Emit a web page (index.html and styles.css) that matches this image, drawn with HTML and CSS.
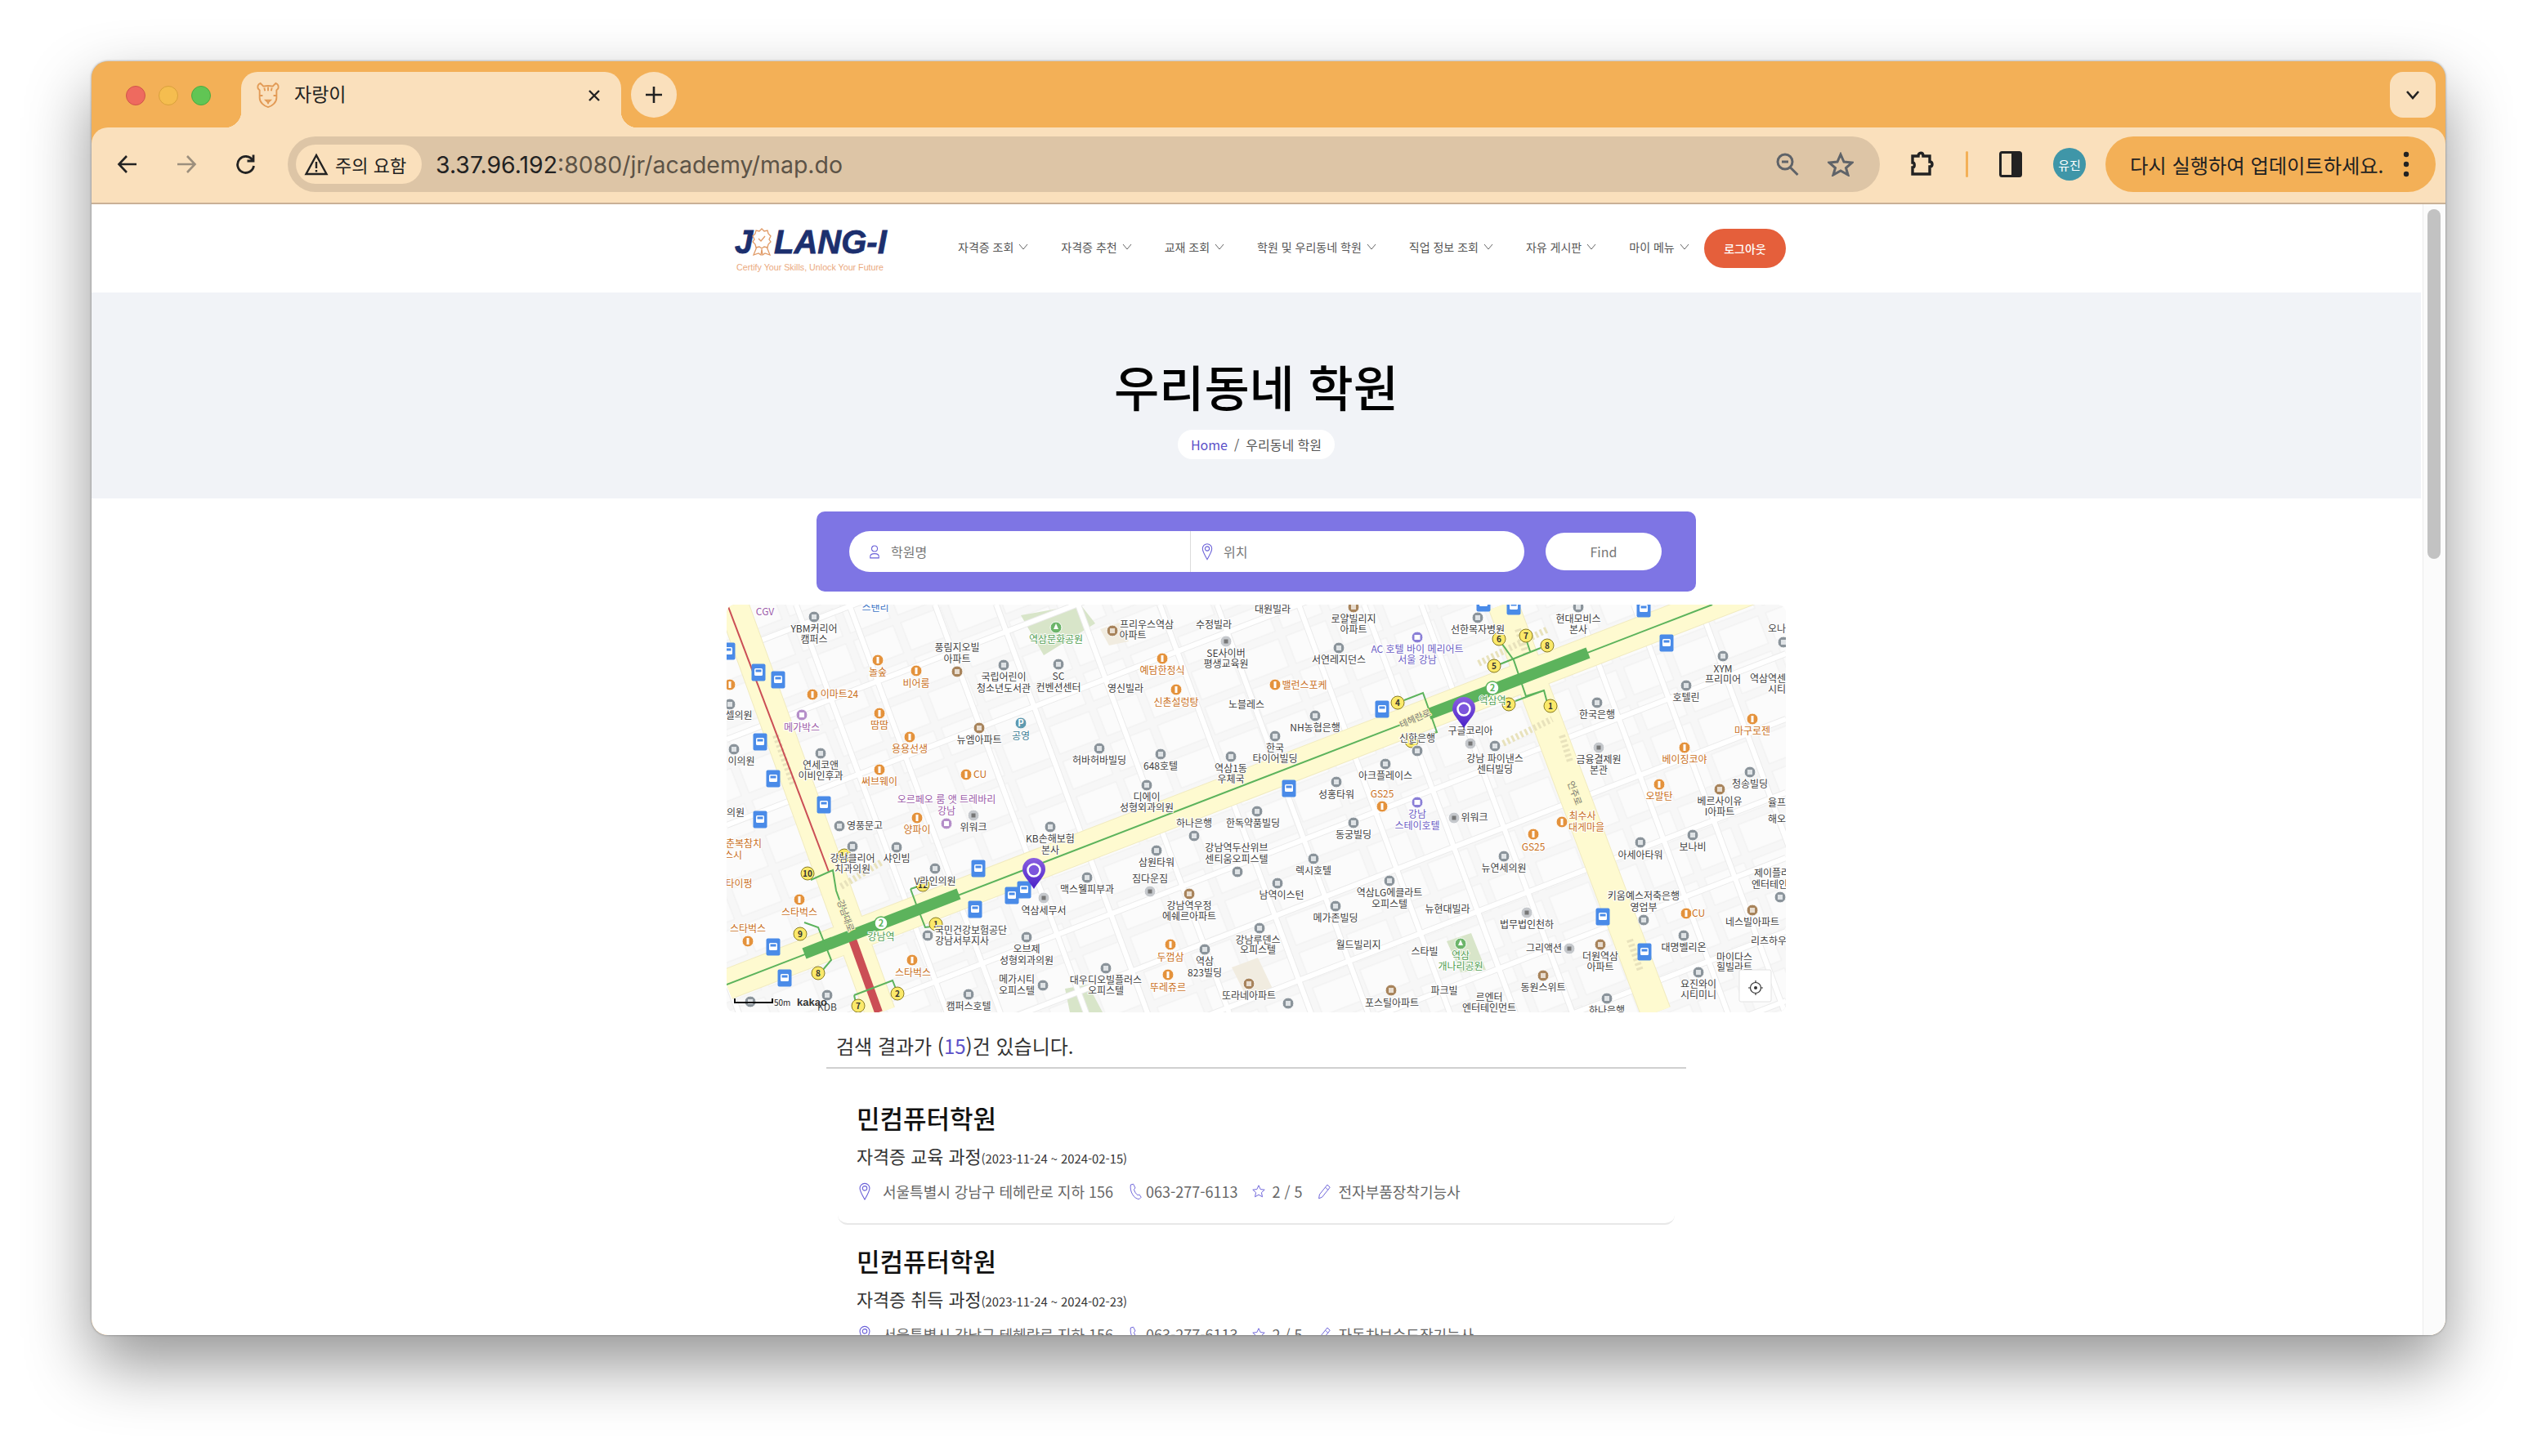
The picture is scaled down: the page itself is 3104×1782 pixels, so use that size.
FILE: index.html
```html
<!DOCTYPE html>
<html lang="ko">
<head>
<meta charset="utf-8">
<title>자랑이</title>
<link rel="stylesheet" href="styles.css">
</head>
<body>
<div class="window">
  <div class="tabstrip">
    <div class="lights"><i class="light red"></i><i class="light yellow"></i><i class="light green"></i></div>
    <div class="tab">
      <svg class="favicon" viewBox="0 0 30 34" fill="none" stroke="#e29a55" stroke-width="2"><path d="M5 2c-3 1-4 4-3 7l2 2v10c0 6 6 11 11 12 5-1 11-6 11-12V11l2-2c1-3 0-6-3-7l-4 4c-4-1-8-1-12 0z"/><path d="M15 7v5M10 8l1 4M20 8l-1 4M4 18h4M22 18h4M12 24h6l-3 3zM15 27v2" /></svg>
      <span class="tab-title">자랑이</span>
      <svg class="tab-close" viewBox="0 0 16 16" fill="none" stroke="#222" stroke-width="2.4"><path d="M2 2l12 12M14 2L2 14"/></svg>
    </div>
    <div class="newtab"><svg viewBox="0 0 22 22" fill="none" stroke="#222" stroke-width="2.6"><path d="M11 1v20M1 11h20"/></svg></div>
    <div class="caret"><svg viewBox="0 0 18 12" fill="none" stroke="#222" stroke-width="2.6"><path d="M2 2l7 8 7-8"/></svg></div>
  </div>
  <div class="toolbar">
    <div class="navbtn"><svg viewBox="0 0 26 26" fill="none" stroke="#222" stroke-width="2.6"><path d="M24 13H3M12 3L2.500 13 12 23"/></svg></div>
    <div class="navbtn"><svg viewBox="0 0 26 26" fill="none" stroke="#9c8f7d" stroke-width="2.6"><path d="M2 13h21M14 3l9.500 10L14 23"/></svg></div>
    <div class="navbtn"><svg viewBox="0 0 26 26" fill="none" stroke="#222" stroke-width="2.800"><path d="M22 8a10 10 0 1 0 1.500 7"/><path d="M23 1.500V9h-7.500" /></svg></div>
    <div class="address">
      <div class="warn">
        <svg viewBox="0 0 30 28" fill="none" stroke="#222" stroke-width="2.400"><path d="M15 3L2.500 26h25z"/><path d="M15 11v8M15 21v2.500"/></svg>
        <span>주의 요함</span>
      </div>
      <div class="url"><b>3.37.96.192</b>:8080/jr/academy/map.do</div>
      <svg class="addr-zoom" viewBox="0 0 30 30" fill="none" stroke="#5f6368" stroke-width="3"><circle cx="12" cy="12" r="9"/><path d="M8 12h8M18.500 19l9 9"/></svg>
      <svg class="addr-star" viewBox="0 0 32 30" fill="none" stroke="#5f6368" stroke-width="3"><path d="M16 3l4 9 10 1-7.500 6.500L25 28l-9-5-9 5 2.500-8.500L2 13l10-1z"/></svg>
    </div>
    <svg class="ext" viewBox="0 0 32 32" fill="none" stroke="#222" stroke-width="3.400"><path d="M4 6h7c0-5 6-5 6 0h8v7c4 0 4 6 0 6v9H4v-8c3 0 3-6 0-6z"/></svg>
    <i class="tool-divider"></i>
    <svg class="sidepanel" viewBox="0 0 28 32"><rect x="1.500" y="1.500" width="25" height="29" rx="2" fill="#fae0bc" stroke="#222" stroke-width="3"/><rect x="15" y="1.500" width="12" height="29" fill="#222"/></svg>
    <div class="avatar">유진</div>
    <div class="update"><span>다시 실행하여 업데이트하세요.</span><svg viewBox="0 0 8 32" fill="#222"><circle cx="4" cy="4" r="3.200"/><circle cx="4" cy="16" r="3.200"/><circle cx="4" cy="28" r="3.200"/></svg></div>
  </div>
  <div class="viewport">
    <div class="page">
      <header class="site-header">
        <div class="logo">
          <div class="logo-mark">
            <span class="logo-j">J</span>
            <svg class="badge" viewBox="0 0 24 34" fill="none" stroke="#e09a66" stroke-width="1.300"><path d="M12 1l3 3 4-1 1 4 3 3-2 4 2 3-3 3-1 4-4-1-3 2-3-2-4 1-1-4-3-3 2-3-2-4 3-3 1-4 4 1z"/><path d="M8 13l3 3 5-6M6 23l-4 10 6-2 3 2 1-7M18 23l4 10-6-2-3 2-1-7"/></svg>
            <span class="logo-word">LANG-I</span>
          </div>
          <div class="logo-tag">Certify Your Skills, Unlock Your Future</div>
        </div>
        <nav class="gnb">
          <a class="gnb-item">자격증 조회<svg viewBox="0 0 12 8"><path d="M1 1l5 6 5-6"/></svg></a>
          <a class="gnb-item">자격증 추천<svg viewBox="0 0 12 8"><path d="M1 1l5 6 5-6"/></svg></a>
          <a class="gnb-item">교재 조회<svg viewBox="0 0 12 8"><path d="M1 1l5 6 5-6"/></svg></a>
          <a class="gnb-item">학원 및 우리동네 학원<svg viewBox="0 0 12 8"><path d="M1 1l5 6 5-6"/></svg></a>
          <a class="gnb-item">직업 정보 조회<svg viewBox="0 0 12 8"><path d="M1 1l5 6 5-6"/></svg></a>
          <a class="gnb-item">자유 게시판<svg viewBox="0 0 12 8"><path d="M1 1l5 6 5-6"/></svg></a>
          <a class="gnb-item">마이 메뉴<svg viewBox="0 0 12 8"><path d="M1 1l5 6 5-6"/></svg></a>
        </nav>
        <a class="logout">로그아웃</a>
      </header>

      <section class="hero">
        <h1>우리동네 학원</h1>
        <div class="crumb"><span class="crumb-home">Home</span><span class="crumb-sep">/</span><span>우리동네 학원</span></div>
      </section>

      <div class="search">
        <div class="search-group">
          <div class="field">
            <svg class="field-ic" viewBox="0 0 16 20" fill="none" stroke="#6a60d8" stroke-width="1.200"><circle cx="8" cy="6" r="4"/><path d="M2 19v-2c0-3 3-4 6-4s6 1 6 4v2z"/></svg>
            <span>학원명</span>
          </div>
          <div class="field field-loc">
            <svg class="field-ic" viewBox="0 0 16 24" fill="none" stroke="#6a60d8" stroke-width="1.200"><path d="M8 23C4 16 1.500 12 1.500 8a6.500 6.500 0 0 1 13 0c0 4-2.500 8-6.500 15z"/><circle cx="8" cy="8" r="3"/></svg>
            <span>위치</span>
          </div>
        </div>
        <div class="find">Find</div>
      </div>

      <div class="map">
        <svg class="map-svg" viewBox="0 0 1296 499">
          <defs>
            <pattern id="blocks" width="62" height="46" patternUnits="userSpaceOnUse" patternTransform="rotate(-21)">
              <rect x="5" y="5" width="52" height="36" fill="#fbfbfb" stroke="#f0f0f0"/>
            </pattern>
            <g id="poi"><circle r="7" fill="#8b949b" stroke="#fff"/><rect x="-3" y="-3" width="6" height="6" fill="#dfe3e6"/></g>
            <g id="poil"><circle r="7" fill="#c5c8cc" stroke="#fff"/><rect x="-2.500" y="-2.500" width="5" height="5" fill="#777"/></g>
            <g id="poib"><circle r="7" fill="#a8845c" stroke="#fff"/><rect x="-3" y="-3" width="6" height="6" fill="#e8ddd0"/></g>
            <g id="poio"><circle r="7" fill="#e4923c" stroke="#fff"/><rect x="-1.500" y="-4" width="3" height="8" fill="#fff"/></g>
            <g id="poip"><circle r="7" fill="#b58fc9" stroke="#fff"/><rect x="-3" y="-3" width="6" height="6" fill="#fff"/></g>
            <g id="poiv"><circle r="7" fill="#8a7fd6" stroke="#fff"/><rect x="-3.500" y="-3" width="7" height="6" fill="#fff"/></g>
            <g id="poig"><circle r="7" fill="#6db56a" stroke="#fff"/><path d="M0-5l3 7h-6z" fill="#fff"/></g>
            <g id="bus"><rect x="-8.500" y="-10.500" width="17" height="21" rx="2" fill="#4a8be8"/><rect x="-5" y="-5" width="10" height="9" rx="1.500" fill="#fff"/><rect x="-3.500" y="-3.500" width="7" height="3" fill="#4a8be8"/></g>
            <linearGradient id="pinfill" x1="0" y1="0" x2="0" y2="1"><stop offset="0" stop-color="#8a5fe0"/><stop offset="1" stop-color="#4a22c8"/></linearGradient>
            <g id="pin"><path d="M0 38C-6 28-14 22-14 14a14 14 0 0 1 28 0c0 8-8 14-14 24z" fill="url(#pinfill)"/><circle cy="15" r="7.500" fill="#7c55dc" stroke="#fff" stroke-width="2.500"/></g>
          </defs>
          <rect width="1296" height="499" fill="#f7f7f7"/>
          <rect x="-100" y="-100" width="1500" height="700" fill="url(#blocks)"/>
          <polygon class="park" points="360,13 433,0 451,23 388,62"/>
          <polygon class="park" points="881,412 911,402 929,447 898,450"/>
          <polygon class="park" points="414,470 442,465 460,499 420,499"/>
          <polygon class="lot" points="457,30 481,22 492,45 468,50"/>
          <polygon class="lot" points="618,444 650,432 668,470 635,478"/>
          <g class="st-c">
            <path d="M0 60L1296-440M0 165L1296-335M0 270L1296-230M0 560L1296 60M0 640L1296 140M0 730L1296 230M0 810L1296 310M0 900L1296 400M0 985L1296 485"/>
            <path d="M-170 0L15 500M85 0L270 500M150 0L335 500M255 0L440 500M330 0L515 500M430 0L615 500M530 0L715 500M600 0L785 500M700 0L885 500M780 0L965 500M850 0L1035 500M1040 0L1225 500M1110 0L1295 500M1190 0L1375 500"/>
          </g>
          <g class="st-w">
            <path d="M0 60L1296-440M0 165L1296-335M0 270L1296-230M0 560L1296 60M0 640L1296 140M0 730L1296 230M0 810L1296 310M0 900L1296 400M0 985L1296 485"/>
            <path d="M-170 0L15 500M85 0L270 500M150 0L335 500M255 0L440 500M330 0L515 500M430 0L615 500M530 0L715 500M600 0L785 500M700 0L885 500M780 0L965 500M850 0L1035 500M1040 0L1225 500M1110 0L1295 500M1190 0L1375 500"/>
          </g>
          <g class="rd-c"><path d="M8 0L188 499M950 0L1137 499M0 465L1296-35"/></g>
          <g class="rd"><path d="M8 0L188 499M950 0L1137 499M0 465L1296-35"/></g>
          <g class="cross"><path d="M60 160L82 222M968 30L978 60M1022 160L1032 192M1105 410L1118 448M140 345L190 315M920 72L1005 30M950 170L1010 140"/></g>
          <path class="red-thin" d="M1 0L125 327"/>
          <path class="red-thick" d="M154 410L186 499"/>
          <path class="sub" d="M0 465L1206 0"/>
          <path class="sub-thick" d="M95 427L284 354M859 134L1054 59"/>
          <g class="exit">
            <path d="M103 337L130 325 134 350 151 397M225 348L232 367 236 377 243 395 251 394M95 389L112 395 128 435 117 448M156 478L203 460 207 470M156 478L158 487M225 348L240 343"/>
            <path d="M948 47L963 68 978 112 1000 105 1004 120M946 73L996 53M983 57L978 42M829 117L852 108 869 156 844 163M965 118L1000 105"/>
          </g>
          <circle class="st-circle" cx="189" cy="390" r="8"/><text class="st-num" x="189" y="394">2</text>
          <circle class="st-circle" cx="937" cy="102" r="8"/><text class="st-num" x="937" y="106">2</text>
          <g class="ex-c">
            <circle cx="144" cy="307" r="8"/><circle cx="99" cy="329" r="8"/><circle cx="240" cy="343" r="8"/><circle cx="256" cy="391" r="8"/><circle cx="90" cy="403" r="8"/><circle cx="112" cy="451" r="8"/><circle cx="209" cy="476" r="8"/><circle cx="161" cy="491" r="8"/>
            <circle cx="945" cy="42" r="8"/><circle cx="978" cy="38" r="8"/><circle cx="1004" cy="50" r="8"/><circle cx="939" cy="75" r="8"/><circle cx="821" cy="120" r="8"/><circle cx="838" cy="167" r="8"/><circle cx="957" cy="122" r="8"/><circle cx="1008" cy="124" r="8"/>
          </g>
          <g class="ex-n">
            <text x="144" y="311">11</text><text x="99" y="333">10</text><text x="240" y="347">12</text><text x="256" y="395">1</text><text x="90" y="407">9</text><text x="112" y="455">8</text><text x="209" y="480">2</text><text x="161" y="495">7</text>
            <text x="945" y="46">6</text><text x="978" y="42">7</text><text x="1004" y="54">8</text><text x="939" y="79">5</text><text x="821" y="124">4</text><text x="838" y="171">3</text><text x="957" y="126">2</text><text x="1008" y="128">1</text>
          </g>
          <g class="pois">
            <use href="#poi" x="107" y="15"/><use href="#poi" x="339" y="74"/><use href="#poi" x="406" y="73"/><use href="#poib" x="282" y="82"/><use href="#poib" x="309" y="151"/><use href="#poib" x="472" y="32"/><use href="#poil" x="611" y="45"/><use href="#poi" x="4" y="122"/><use href="#poi" x="9" y="177"/><use href="#poi" x="115" y="182"/><use href="#poi" x="456" y="176"/><use href="#poi" x="531" y="183"/><use href="#poi" x="617" y="186"/><use href="#poi" x="514" y="221"/><use href="#poi" x="649" y="253"/><use href="#poi" x="396" y="272"/><use href="#poil" x="302" y="258"/><use href="#poi" x="138" y="271"/><use href="#poi" x="154" y="296"/><use href="#poi" x="208" y="297"/><use href="#poi" x="255" y="323"/><use href="#poi" x="526" y="301"/><use href="#poi" x="572" y="283"/><use href="#poi" x="625" y="327"/><use href="#poi" x="441" y="334"/><use href="#poil" x="388" y="359"/><use href="#poil" x="518" y="351"/><use href="#poib" x="566" y="354"/><use href="#poi" x="246" y="405"/><use href="#poi" x="367" y="407"/><use href="#poi" x="652" y="396"/><use href="#poi" x="585" y="422"/><use href="#poi" x="464" y="445"/><use href="#poi" x="387" y="466"/><use href="#poi" x="296" y="477"/><use href="#poi" x="123" y="478"/><use href="#poi" x="29" y="486"/><use href="#poib" x="639" y="464"/>
            <use href="#poio" x="185" y="68"/><use href="#poio" x="232" y="81"/><use href="#poio" x="105" y="110"/><use href="#poio" x="187" y="133"/><use href="#poio" x="224" y="162"/><use href="#poio" x="187" y="202"/><use href="#poio" x="293" y="208"/><use href="#poio" x="233" y="261"/><use href="#poio" x="533" y="66"/><use href="#poio" x="550" y="104"/><use href="#poio" x="89" y="361"/><use href="#poio" x="26" y="412"/><use href="#poio" x="227" y="435"/><use href="#poio" x="543" y="416"/><use href="#poio" x="540" y="453"/><use href="#poio" x="4" y="98"/>
            <use href="#poip" x="92" y="135"/><use href="#poip" x="269" y="268"/><use href="#poig" x="403" y="28"/>
            <use href="#poib" x="767" y="3"/><use href="#poi" x="919" y="16"/><use href="#poi" x="1042" y="3"/><use href="#poi" x="749" y="53"/><use href="#poiv" x="845" y="40"/><use href="#poio" x="671" y="98"/><use href="#poi" x="1219" y="63"/><use href="#poi" x="1293" y="46"/><use href="#poi" x="1174" y="99"/><use href="#poi" x="1065" y="120"/><use href="#poio" x="1255" y="140"/><use href="#poio" x="1172" y="175"/><use href="#poil" x="1067" y="175"/><use href="#poi" x="720" y="136"/><use href="#poi" x="671" y="161"/><use href="#poi" x="845" y="179"/><use href="#poil" x="910" y="170"/><use href="#poi" x="940" y="173"/><use href="#poi" x="806" y="195"/><use href="#poi" x="746" y="217"/><use href="#poio" x="802" y="247"/><use href="#poio" x="1141" y="220"/><use href="#poib" x="1215" y="226"/><use href="#poi" x="1252" y="205"/><use href="#poiv" x="845" y="242"/><use href="#poil" x="890" y="261"/><use href="#poio" x="1022" y="266"/><use href="#poio" x="987" y="281"/><use href="#poi" x="767" y="267"/><use href="#poi" x="1118" y="291"/><use href="#poi" x="1182" y="282"/><use href="#poi" x="951" y="308"/><use href="#poi" x="718" y="311"/><use href="#poi" x="811" y="338"/><use href="#poi" x="674" y="341"/><use href="#poi" x="745" y="369"/><use href="#poil" x="979" y="377"/><use href="#poi" x="1122" y="386"/><use href="#poio" x="1174" y="378"/><use href="#poib" x="1255" y="374"/><use href="#poi" x="1289" y="358"/><use href="#poi" x="1171" y="405"/><use href="#poil" x="1031" y="421"/><use href="#poib" x="1069" y="416"/><use href="#poig" x="898" y="415"/><use href="#poi" x="1189" y="450"/><use href="#poib" x="999" y="454"/><use href="#poib" x="813" y="472"/><use href="#poi" x="687" y="488"/><use href="#poi" x="1077" y="482"/>
            <use href="#bus" x="39" y="83"/><use href="#bus" x="63" y="92"/><use href="#bus" x="41" y="168"/><use href="#bus" x="57" y="213"/><use href="#bus" x="119" y="245"/><use href="#bus" x="41" y="263"/><use href="#bus" x="308" y="323"/><use href="#bus" x="364" y="349"/><use href="#bus" x="349" y="356"/><use href="#bus" x="304" y="373"/><use href="#bus" x="57" y="419"/><use href="#bus" x="71" y="457"/><use href="#bus" x="2" y="57"/>
            <use href="#bus" x="963" y="2"/><use href="#bus" x="1122" y="5"/><use href="#bus" x="1150" y="47"/><use href="#bus" x="802" y="128"/><use href="#bus" x="688" y="225"/><use href="#bus" x="1072" y="382"/><use href="#bus" x="1123" y="425"/><use href="#bus" x="926" y="-2"/>
          </g>
          <circle class="teal-dot" cx="360" cy="145" r="7"/><text class="teal-p" x="360" y="149">P</text>
          <g class="m">
            <text class="p" x="47" y="13">CGV</text><text class="b" x="182" y="8">스탠리</text><text x="107" y="34">YBM커리어</text><text x="107" y="47">캠퍼스</text><text x="282" y="57">풍림지오빌</text><text x="282" y="71">아파트</text><text class="o" x="185" y="87">놀숲</text><text class="o" x="232" y="101">비어룸</text><text class="o" x="138" y="114">이마트24</text><text x="339" y="93">국립어린이</text><text x="339" y="107">청소년도서관</text><text x="406" y="92">SC</text><text x="406" y="106">컨벤션센터</text><text class="g" x="403" y="47">역삼문화공원</text><text x="514" y="29">프리우스역삼</text><text x="497" y="42">아파트</text><text x="596" y="29">수정빌라</text><text x="611" y="64">SE사이버</text><text x="611" y="77">평생교육원</text><text class="o" x="533" y="85">예담한정식</text><text x="488" y="107">영신빌라</text><text class="o" x="550" y="124">신촌설렁탕</text><text x="636" y="127">노블레스</text><text x="15" y="140">셀의원</text><text class="p" x="92" y="155">메가박스</text><text class="o" x="187" y="152">땀땀</text><text class="o" x="224" y="181">용용선생</text><text x="309" y="170">뉴엠아파트</text><text class="t" x="360" y="165">공영</text><text x="456" y="195">허바허바빌딩</text><text x="531" y="202">648호텔</text><text x="617" y="205">역삼1동</text><text x="617" y="218">우체국</text><text x="18" y="196">이의원</text><text x="115" y="201">연세코앤</text><text x="115" y="214">이비인후과</text><text class="o" x="187" y="221">써브웨이</text><text class="o" x="310" y="212">CU</text><text x="514" y="240">디에이</text><text x="514" y="253">성형외과의원</text><text class="p" x="269" y="243">오르페오 룸 앳 트레바리</text><text class="p" x="269" y="257">강남</text><text x="11" y="259">의원</text><text class="o" x="233" y="280">양파이</text><text x="302" y="277">위워크</text><text x="169" y="275">영풍문고</text><text x="396" y="291">KB손해보험</text><text x="396" y="305">본사</text><text x="572" y="272">하나은행</text><text x="644" y="272">한독약품빌딩</text><text x="624" y="302">강남역두산위브</text><text x="624" y="316">센티움오피스텔</text><text class="o" x="21" y="297">춘복참치</text><text class="o" x="8" y="311">스시</text><text class="o" x="15" y="346">타이펑</text><text x="154" y="315">강남클리어</text><text x="154" y="328">치과의원</text><text x="208" y="315">샤인빔</text><text x="255" y="343">V라인의원</text><text x="526" y="320">삼원타워</text><text x="518" y="340">짐다운짐</text><text x="441" y="353">맥스웰피부과</text><text x="388" y="379">역삼세무서</text><text x="566" y="373">강남역우정</text><text x="566" y="386">에쉐르아파트</text><text class="o" x="89" y="381">스타벅스</text><text class="o" x="26" y="401">스타벅스</text><text x="299" y="403">국민건강보험공단</text><text x="288" y="416">강남서부지사</text><text class="g" x="189" y="411">강남역</text><text x="367" y="426">오브제</text><text x="367" y="440">성형외과의원</text><text x="650" y="415">강남루덴스</text><text x="650" y="427">오피스텔</text><text class="o" x="543" y="436">두껍삼</text><text x="585" y="441">역삼</text><text x="585" y="455">823빌딩</text><text class="o" x="228" y="455">스타벅스</text><text x="355" y="463">메가시티</text><text x="355" y="477">오피스텔</text><text x="464" y="464">대우디오빌플러스</text><text x="464" y="477">오피스텔</text><text class="o" x="540" y="473">뚜레쥬르</text><text x="639" y="483">또라네아파트</text><text x="296" y="496">캠퍼스호텔</text><text x="123" y="497">KDB</text>
            <text x="767" y="22">로얄빌리지</text><text x="767" y="35">아파트</text><text x="668" y="10">대원빌라</text><text x="749" y="72">서연레지던스</text><text x="919" y="35">선한목자병원</text><text x="1042" y="22">현대모비스</text><text x="1042" y="35">본사</text><text class="v" x="845" y="59">AC 호텔 바이 메리어트</text><text class="v" x="845" y="72">서울 강남</text><text class="o" x="707" y="103">밸런스포케</text><text x="1285" y="34">오나</text><text x="1219" y="83">XYM</text><text x="1219" y="96">프리미어</text><text x="1274" y="95">역삼역센</text><text x="1285" y="108">시티</text><text x="1174" y="118">호텔린</text><text x="1065" y="139">한국은행</text><text class="o" x="1255" y="159">마구로젠</text><text class="o" x="1172" y="194">베이징코야</text><text x="1067" y="194">금융결제원</text><text x="1067" y="207">본관</text><text x="720" y="155">NH농협은행</text><text x="671" y="180">한국</text><text x="671" y="193">타이어빌딩</text><text x="910" y="159">구글코리아</text><text x="845" y="168">신한은행</text><text x="940" y="193">강남 파이낸스</text><text x="940" y="206">센터빌딩</text><text x="806" y="214">아크플레이스</text><text x="746" y="237">성홍타워</text><text class="o" x="802" y="236">GS25</text><text class="o" x="1141" y="239">오발탄</text><text x="1215" y="245">베르사이유</text><text x="1215" y="258">I아파트</text><text x="1252" y="224">청송빌딩</text><text x="1285" y="247">율프</text><text x="1285" y="267">해오</text><text class="v" x="845" y="261">강남</text><text class="v" x="845" y="275">스테이호텔</text><text x="915" y="265">위워크</text><text class="o" x="1047" y="263">최수사</text><text class="o" x="1052" y="277">대게마을</text><text x="767" y="286">동궁빌딩</text><text class="o" x="987" y="301">GS25</text><text x="1118" y="311">아세아타워</text><text x="1182" y="301">보나비</text><text x="951" y="327">뉴연세의원</text><text x="718" y="330">렉시호텔</text><text x="811" y="357">역삼LG에클라트</text><text x="811" y="371">오피스텔</text><text x="1279" y="333">제이플러</text><text x="1276" y="347">엔터테인</text><text x="679" y="360">남역이스턴</text><text x="882" y="377">뉴현대빌라</text><text x="745" y="388">메가존빌딩</text><text x="979" y="396">법무법인천하</text><text x="1122" y="361">키움예스저축은행</text><text x="1122" y="375">영업부</text><text class="o" x="1189" y="382">CU</text><text x="1255" y="393">네스빌아파트</text><text x="1275" y="416">리츠하우</text><text x="773" y="421">월드빌리지</text><text x="854" y="429">스타빌</text><text class="g" x="898" y="434">역삼</text><text class="g" x="898" y="447">개나리공원</text><text x="1000" y="425">그리액션</text><text x="1069" y="435">더원역삼</text><text x="1069" y="448">아파트</text><text x="1171" y="424">대명벨리온</text><text x="1233" y="436">마이다스</text><text x="1233" y="448">힐빌라트</text><text x="1189" y="469">요진와이</text><text x="1189" y="482">시티미니</text><text x="878" y="477">파크빌</text><text x="999" y="473">동원스위트</text><text x="814" y="492">포스틸아파트</text><text x="933" y="485">르엔터</text><text x="933" y="498">엔터테인먼트</text><text x="1077" y="501">하나은행</text>
            <text class="g" x="937" y="122">역삼역</text>
            <text class="road-lb" transform="translate(844 143) rotate(-24)">테헤란로</text>
            <text class="road-lb" transform="translate(142 382) rotate(70)">강남대로</text>
            <text class="road-lb" transform="translate(1034 232) rotate(70)">언주로</text>
          </g>
          <use href="#pin" x="376" y="310"/>
          <use href="#pin" x="902" y="113"/>
          <path class="scale" d="M10 482v5h46v-5"/>
          <text class="scale-t" x="58" y="491">50m</text>
          <text class="kakao" x="86" y="491">kakao</text>
          <rect class="loc-btn" x="1239" y="447" width="39" height="39" rx="2"/>
          <circle class="loc-ic" cx="1259" cy="469" r="6.500"/><circle cx="1259" cy="469" r="2" fill="#333"/>
          <path class="loc-ic" d="M1259 460v3M1259 475v3M1250 469h3M1265 469h3"/>
        </svg>
      </div>

      <div class="results">
        <div class="result-count">검색 결과가 (<b>15</b>)건 있습니다.</div>
        <article class="card">
          <h3>민컴퓨터학원</h3>
          <div class="course">자격증 교육 과정<small>(2023-11-24 ~ 2024-02-15)</small></div>
          <div class="meta">
            <span class="meta-item m-addr"><svg viewBox="0 0 16 24"><path d="M8 23C4 16 1.500 12 1.500 8a6.500 6.500 0 0 1 13 0c0 4-2.500 8-6.500 15z"/><circle cx="8" cy="8" r="3"/></svg>서울특별시 강남구 테헤란로 지하 156</span>
            <span class="meta-item m-tel"><svg viewBox="0 0 20 24"><path d="M3 2l4-1 3 6-2 2c1 4 3 7 6 9l2-1 3 4-3 3C8 24 1 12 3 2z"/></svg>063-277-6113</span>
            <span class="meta-item m-star"><svg viewBox="0 0 20 20"><path d="M10 1l2.700 6 6.300.700-4.700 4.300 1.300 6.500L10 15.300 4.400 18.500l1.300-6.500L1 7.700 7.300 7z"/></svg>2 / 5</span>
            <span class="meta-item m-pen"><svg viewBox="0 0 20 24"><path d="M15 2l4 4L7 21l-5 2 1-6zM12 6l4 4"/></svg>전자부품장착기능사</span>
          </div>
        </article>
        <article class="card">
          <h3>민컴퓨터학원</h3>
          <div class="course">자격증 취득 과정<small>(2023-11-24 ~ 2024-02-23)</small></div>
          <div class="meta">
            <span class="meta-item m-addr"><svg viewBox="0 0 16 24"><path d="M8 23C4 16 1.500 12 1.500 8a6.500 6.500 0 0 1 13 0c0 4-2.500 8-6.500 15z"/><circle cx="8" cy="8" r="3"/></svg>서울특별시 강남구 테헤란로 지하 156</span>
            <span class="meta-item m-tel"><svg viewBox="0 0 20 24"><path d="M3 2l4-1 3 6-2 2c1 4 3 7 6 9l2-1 3 4-3 3C8 24 1 12 3 2z"/></svg>063-277-6113</span>
            <span class="meta-item m-star"><svg viewBox="0 0 20 20"><path d="M10 1l2.700 6 6.300.700-4.700 4.300 1.300 6.500L10 15.300 4.400 18.500l1.300-6.500L1 7.700 7.300 7z"/></svg>2 / 5</span>
            <span class="meta-item m-pen"><svg viewBox="0 0 20 24"><path d="M15 2l4 4L7 21l-5 2 1-6zM12 6l4 4"/></svg>자동차보수도장기능사</span>
          </div>
        </article>
      </div>
    </div>
    <div class="scrollbar"><i class="thumb"></i></div>
  </div>
</div>
</body>
</html>
```
FILE: styles.css
```css
* { box-sizing: border-box; }
html, body { height: 100%; }
body {
  margin: 0;
  padding: 75px 112px 0;
  background: #fff;
  font-family: "Noto Sans CJK KR", "Noto Sans", sans-serif;
  color: #222;
  overflow: hidden;
}
svg { display: block; }

.window {
  width: 2880px;
  height: 1559px;
  border-radius: 20px;
  background: #f3b057;
  overflow: hidden;
  display: flex;
  flex-direction: column;
  box-shadow: 0 36px 80px rgba(0,0,0,.42), 0 0 3px rgba(0,0,0,.4);
}

/* tab strip */
.tabstrip {
  height: 81px;
  flex: none;
  display: flex;
  align-items: flex-start;
  padding: 13px 12px 0 42px;
}
.lights { display: flex; gap: 16px; margin-top: 17px; }
.light { width: 24px; height: 24px; border-radius: 50%; display: block; }
.red { background: #ee6a5f; border: 1px solid #d0544a; }
.yellow { background: #f5bd4f; border: 1px solid #d9a03c; }
.green { background: #61c554; border: 1px solid #4ca940; }
.tab {
  position: relative;
  margin-left: 37px;
  width: 465px;
  height: 68px;
  background: #fae0bc;
  border-radius: 20px 20px 0 0;
  display: flex;
  align-items: flex-start;
  padding: 12px 0 0 18px;
}
.tab::before, .tab::after {
  content: "";
  position: absolute;
  bottom: 0;
  width: 20px;
  height: 20px;
}
.tab::before { left: -20px; background: radial-gradient(circle at 0 0, #f3b057 20px, #fae0bc 20.5px); }
.tab::after { right: -20px; background: radial-gradient(circle at 100% 0, #f3b057 20px, #fae0bc 20.5px); }
.favicon { width: 30px; height: 32px; }
.tab-title { margin-left: 17px; font-size: 23px; line-height: 28px; }
.tab-close { width: 16px; height: 16px; margin-left: 296px; margin-top: 9px; }
.newtab, .caret {
  width: 56px;
  height: 56px;
  border-radius: 50%;
  background: #fae0bc;
  display: flex;
  align-items: center;
  justify-content: center;
}
.newtab { margin-left: 12px; }
.newtab svg { width: 22px; height: 22px; }
.caret { margin-left: auto; border-radius: 16px; }
.caret svg { width: 18px; height: 12px; }

/* toolbar */
.toolbar {
  height: 94px;
  flex: none;
  background: #fae0bc;
  border-radius: 20px 20px 0 0;
  border-bottom: 2px solid #c9b196;
  display: flex;
  align-items: center;
  padding: 0 12px 2px 24px;
}
.navbtn { width: 40px; height: 40px; margin-right: 32px; display: flex; align-items: center; justify-content: center; }
.navbtn svg { width: 26px; height: 26px; }
.address {
  flex: 1;
  height: 68px;
  border-radius: 34px;
  background: #ddc5a6;
  display: flex;
  align-items: center;
  padding: 0 32px 0 10px;
}
.warn {
  width: 154px;
  height: 48px;
  border-radius: 24px;
  background: #fae0bc;
  display: flex;
  align-items: center;
  gap: 8px;
  padding-left: 10px;
  font-size: 22px;
}
.warn svg { width: 30px; height: 28px; flex: none; }
.url {
  margin-left: 17px;
  flex: 1;
  font-family: Inter, "Liberation Sans", sans-serif;
  font-size: 28.450px;
  color: #5c5347;
}
.url b { font-weight: 400; color: #222; }
.addr-zoom { width: 30px; height: 30px; }
.addr-star { width: 32px; height: 30px; margin-left: 34px; }
.ext { width: 32px; height: 32px; margin-left: 36px; flex: none; }
.tool-divider { width: 3px; height: 32px; background: #f3b057; margin-left: 37px; border-radius: 2px; flex: none; display: block; }
.sidepanel { width: 28px; height: 32px; margin-left: 38px; flex: none; }
.avatar {
  width: 40px;
  height: 40px;
  margin-left: 38px;
  flex: none;
  border-radius: 50%;
  background: #3f96a8;
  color: #fff;
  font-size: 15px;
  display: flex;
  align-items: center;
  justify-content: center;
}
.update {
  width: 404px;
  height: 68px;
  margin-left: 24px;
  flex: none;
  border-radius: 34px;
  background: #f3b057;
  display: flex;
  align-items: center;
  padding-left: 30px;
  font-size: 24.250px;
  white-space: nowrap;
}
.update svg { width: 8px; height: 32px; margin-left: 24px; flex: none; }

/* page */
.viewport { flex: 1; min-height: 0; background: #fff; display: flex; overflow: hidden; }
.page { flex: 1; min-width: 0; padding-right: 2px; }
.scrollbar {
  width: 28px;
  flex: none;
  background: #fbfbfb;
  border-left: 1px solid #ececec;
  padding: 6px 6px 0 5px;
}
.thumb { display: block; height: 428px; border-radius: 8px; background: #c2c2c2; }

.site-header {
  height: 108px;
  display: flex;
  align-items: flex-start;
  padding: 30px 0 0 787px;
}
.logo { width: 185px; flex: none; }
.logo-mark { display: flex; align-items: center; height: 32px; color: #1c2f6e; white-space: nowrap; }
.logo-j, .logo-word {
  flex: none;
  font-family: "Liberation Sans", sans-serif;
  font-weight: 700;
  font-style: italic;
  font-size: 40px;
  line-height: 32px;
  -webkit-text-stroke: .8px #1c2f6e;
}
.logo-j { width: 21px; }
.badge { width: 24px; height: 34px; flex: none; margin: 0 3px 0 0; }
.logo-tag {
  font-family: "Liberation Sans", sans-serif;
  font-size: 10.700px;
  color: #eaa97e;
  margin: 9px 0 0 2px;
  white-space: nowrap;
}
.gnb { display: flex; gap: 40px; margin-left: 88px; padding-top: 10px; }
.gnb-item {
  display: flex;
  align-items: center;
  gap: 6px;
  font-size: 14px;
  line-height: 24px;
  color: #555;
  white-space: nowrap;
}
.gnb-item svg { width: 12px; height: 8px; fill: none; stroke: #666; stroke-width: 1; }
.logout {
  margin-left: auto;
  margin-right: 777px;
  width: 100px;
  height: 48px;
  flex: none;
  border-radius: 24px;
  background: #e55f3b;
  color: #fff;
  font-size: 14px;
  font-weight: 500;
  display: flex;
  align-items: center;
  justify-content: center;
}

.hero {
  height: 252px;
  background: #f1f3f7;
  padding-top: 78px;
  display: flex;
  flex-direction: column;
  align-items: center;
}
.hero h1 {
  margin: 0;
  font-size: 60px;
  line-height: 72px;
  font-weight: 500;
  color: #000;
}
.crumb {
  margin-top: 18px;
  height: 36px;
  padding: 0 16px;
  border-radius: 18px;
  background: #fff;
  display: flex;
  align-items: center;
  gap: 8px;
  font-size: 16px;
  color: #555;
}
.crumb-home { color: #5b50c8; }

.search {
  width: 1076px;
  height: 98px;
  margin: 16px auto 0;
  background: #7e75e4;
  border-radius: 10px;
  display: flex;
  align-items: center;
  padding: 0 40px;
}
.search-group {
  width: 826px;
  height: 50px;
  background: #fff;
  border-radius: 25px;
  display: flex;
}
.field {
  display: flex;
  align-items: center;
  font-size: 16px;
  color: #777;
  width: 417px;
  padding-left: 24px;
  gap: 13px;
}
.field-loc { width: 409px; border-left: 1px solid #dcdcdc; padding-left: 13px; gap: 13px; }
.field-ic { width: 14px; height: 22px; flex: none; }
.find {
  width: 142px;
  height: 46px;
  margin-left: 26px;
  background: #fff;
  border-radius: 23px;
  color: #777;
  font-size: 16px;
  display: flex;
  align-items: center;
  justify-content: center;
}

.map { width: 1296px; height: 499px; margin: 16px auto 0; border-radius: 10px; overflow: hidden; }
.map-svg { width: 1296px; height: 499px; }
.park { fill: #d8e5c9; }
.lot { fill: #f1ece0; }
.st-c path { fill: none; stroke: #ebebeb; stroke-width: 8; }
.st-w path { fill: none; stroke: #fff; stroke-width: 6; }
.rd-c path { fill: none; stroke: #f1ebc0; stroke-width: 38; }
.rd path { fill: none; stroke: #fefad0; stroke-width: 36; }
.cross path { fill: none; stroke: #e8e2bc; stroke-width: 8; stroke-dasharray: 3 3; }
.red-thin { fill: none; stroke: #cb4e55; stroke-width: 2; }
.red-thick { fill: none; stroke: #cb4e55; stroke-width: 10; }
.sub { fill: none; stroke: #5cb35c; stroke-width: 2; }
.sub-thick { fill: none; stroke: #5cb35c; stroke-width: 14; }
.exit path { fill: none; stroke: #5cb35c; stroke-width: 2; }
.st-circle { fill: #fff; stroke: #5cb35c; stroke-width: 1.500; }
.st-num { fill: #5cb35c; font-size: 11px; text-anchor: middle; font-weight: 700; }
.ex-c circle { fill: #fbe96a; stroke: #8a7d22; stroke-width: 1; }
.ex-n text { font-size: 10px; font-weight: 700; text-anchor: middle; fill: #333; }
.teal-dot { fill: #5e9ab0; stroke: #fff; }
.teal-p { fill: #fff; font-size: 11px; font-weight: 700; text-anchor: middle; }
.m text {
  font-size: 12px;
  text-anchor: middle;
  fill: #404040;
  paint-order: stroke;
  stroke: #fff;
  stroke-width: 2px;
}
.m .o { fill: #c96f1c; }
.m .p { fill: #9b5aa8; }
.m .v { fill: #6a5cc4; }
.m .g { fill: #4f9e4f; }
.m .b { fill: #3a72c4; }
.m .t { fill: #3a7a92; }
.m .road-lb { font-size: 11px; fill: #777; stroke: #fdf8c3; }
.scale { fill: none; stroke: #111; stroke-width: 2; }
.scale-t { font-size: 10px; fill: #222; }
.kakao { font-family: "Liberation Sans", sans-serif; font-size: 13px; font-weight: 700; fill: #333; }
.loc-btn { fill: #fff; stroke: #e3e3e3; }
.loc-ic { fill: none; stroke: #333; stroke-width: 1.200; }

.results { width: 1052px; margin: 24px auto 0; }
.result-count {
  height: 45px;
  padding-left: 12px;
  border-bottom: 2px solid #d0d0d0;
  font-size: 24px;
  line-height: 34px;
  color: #333;
  margin-bottom: 16px;
}
.result-count b { font-weight: 400; color: #5b50c8; }
.card {
  margin: 0 14px;
  height: 175px;
  padding: 24px 0 0 23px;
  border-bottom: 2px solid #e8e8e8;
  border-radius: 0 0 12px 12px;
}
.card h3 { margin: 0; font-size: 31px; line-height: 40px; font-weight: 500; color: #111; }
.course { margin-top: 12px; font-size: 21.800px; line-height: 30px; color: #333; white-space: nowrap; }
.course small { font-size: 14.800px; }
.meta { margin-top: 11px; height: 28px; display: flex; font-size: 18px; line-height: 28px; color: #666; white-space: nowrap; }
.meta-item { display: flex; align-items: center; }
.meta-item svg { flex: none; fill: none; stroke: #6a60d8; stroke-width: 1.200; width: 16px; height: 22px; }
.m-addr svg { margin: 0 14px 0 2px; }
.m-tel { margin-left: 19px; }
.m-tel svg { margin-right: 5px; }
.m-star { margin-left: 18px; }
.m-star svg { margin-right: 8px; }
.m-pen { margin-left: 18px; }
.m-pen svg { margin-right: 10px; }
```
